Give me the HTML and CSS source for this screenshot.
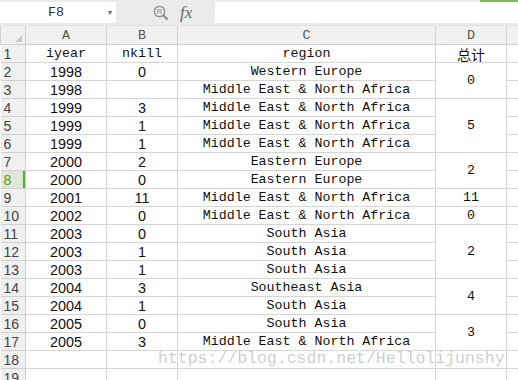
FILE: index.html
```html
<!DOCTYPE html>
<html lang="zh-CN">
<head>
  <meta charset="UTF-8">
  <title>Sheet</title>
  <link rel="stylesheet" href="styles.css">
</head>
<body>
  <div class="toolbar">
    <div class="name-box">
      <span class="cell-ref">F8</span>
      <span class="drop">&#9662;</span>
    </div>
    <div class="tools">
      <svg class="zoom-icon" width="16" height="16" viewBox="0 0 16 16">
        <circle cx="6.5" cy="6.5" r="5.2" fill="none" stroke="#8a8a8a" stroke-width="1.3"/>
        <line x1="10.3" y1="10.3" x2="14.5" y2="14.5" stroke="#8a8a8a" stroke-width="2"/>
        <text x="6.5" y="9.3" font-size="7.5" font-family="Liberation Sans, sans-serif" text-anchor="middle" fill="#8a8a8a">R</text>
      </svg>
      <span class="fx">fx</span>
    </div>
    <div class="formula"></div>
    <div class="accent"></div>
  </div>

  <table class="sheet">
    <colgroup>
      <col class="c-hdr">
      <col class="c-a">
      <col class="c-b">
      <col class="c-c">
      <col class="c-d">
      <col class="c-e">
    </colgroup>
    <thead>
      <tr>
        <th class="corner"><span class="tri"></span></th>
        <th>A</th><th>B</th><th>C</th><th>D</th><th></th>
      </tr>
    </thead>
    <tbody>
      <tr><td class="rn">1</td><td class="txt">iyear</td><td class="txt">nkill</td><td class="txt">region</td><td class="cjk">总计</td><td></td></tr>
      <tr><td class="rn">2</td><td class="num">1998</td><td class="num">0</td><td class="txt">Western Europe</td><td class="tot" rowspan="2">0</td><td></td></tr>
      <tr><td class="rn">3</td><td class="num">1998</td><td class="num"></td><td class="txt">Middle East &amp; North Africa</td><td></td></tr>
      <tr><td class="rn">4</td><td class="num">1999</td><td class="num">3</td><td class="txt">Middle East &amp; North Africa</td><td class="tot" rowspan="3">5</td><td></td></tr>
      <tr><td class="rn">5</td><td class="num">1999</td><td class="num">1</td><td class="txt">Middle East &amp; North Africa</td><td></td></tr>
      <tr><td class="rn">6</td><td class="num">1999</td><td class="num">1</td><td class="txt">Middle East &amp; North Africa</td><td></td></tr>
      <tr><td class="rn">7</td><td class="num">2000</td><td class="num">2</td><td class="txt">Eastern Europe</td><td class="tot" rowspan="2">2</td><td></td></tr>
      <tr><td class="rn active">8</td><td class="num">2000</td><td class="num">0</td><td class="txt">Eastern Europe</td><td></td></tr>
      <tr><td class="rn">9</td><td class="num">2001</td><td class="num">11</td><td class="txt">Middle East &amp; North Africa</td><td class="tot">11</td><td></td></tr>
      <tr><td class="rn">10</td><td class="num">2002</td><td class="num">0</td><td class="txt">Middle East &amp; North Africa</td><td class="tot">0</td><td></td></tr>
      <tr><td class="rn">11</td><td class="num">2003</td><td class="num">0</td><td class="txt">South Asia</td><td class="tot" rowspan="3">2</td><td></td></tr>
      <tr><td class="rn">12</td><td class="num">2003</td><td class="num">1</td><td class="txt">South Asia</td><td></td></tr>
      <tr><td class="rn">13</td><td class="num">2003</td><td class="num">1</td><td class="txt">South Asia</td><td></td></tr>
      <tr><td class="rn">14</td><td class="num">2004</td><td class="num">3</td><td class="txt">Southeast Asia</td><td class="tot" rowspan="2">4</td><td></td></tr>
      <tr><td class="rn">15</td><td class="num">2004</td><td class="num">1</td><td class="txt">South Asia</td><td></td></tr>
      <tr><td class="rn">16</td><td class="num">2005</td><td class="num">0</td><td class="txt">South Asia</td><td class="tot" rowspan="2">3</td><td></td></tr>
      <tr><td class="rn">17</td><td class="num">2005</td><td class="num">3</td><td class="txt">Middle East &amp; North Africa</td><td></td></tr>
      <tr><td class="rn">18</td><td></td><td></td><td></td><td></td><td></td></tr>
      <tr><td class="rn">19</td><td></td><td></td><td></td><td></td><td></td></tr>
    </tbody>
  </table>

  <div class="watermark">https://blog.csdn.net/Hellolijunshy</div>
</body>
</html>
```

FILE: styles.css
```css
html, body {
  margin: 0;
  padding: 0;
  width: 518px;
  height: 380px;
  overflow: hidden;
  background-color: #fff;
  font-family: "Liberation Mono", monospace;
  position: relative;
}
.toolbar {
  position: relative;
  display: flex;
  align-items: center;
  height: 26px;
  background-color: #ebebeb;
  border-bottom: 1px solid #e0e0e0;
  box-sizing: border-box;
}
.name-box {
  display: flex;
  align-items: center;
  width: 116px;
  height: 21px;
  background-color: #fff;
  box-sizing: border-box;
  padding: 0 4px 0 0;
}
.cell-ref {
  flex: 1;
  text-align: center;
  font-size: 13.3px;
  color: #333;
  padding-left: 4px;
}
.drop {
  font-family: "DejaVu Sans", sans-serif;
  font-size: 8px;
  color: #666;
}
.tools {
  display: flex;
  align-items: center;
  gap: 11px;
  width: 99px;
  padding-left: 37px;
  box-sizing: border-box;
}
.zoom-icon {
  display: block;
}
.fx {
  font-family: "Liberation Serif", serif;
  font-style: italic;
  font-size: 17px;
  color: #666;
  line-height: 1;
}
.formula {
  flex: 1;
  height: 21px;
  background-color: #fff;
}
.accent {
  position: absolute;
  top: 0;
  right: 0;
  width: 38px;
  height: 2px;
  background-color: #7dbb5c;
}
.sheet {
  border-collapse: collapse;
  table-layout: fixed;
  width: 530px;
}
.c-hdr { width: 25px; }
.c-a { width: 81px; }
.c-b { width: 71px; }
.c-c { width: 258px; }
.c-d { width: 71px; }
.c-e { width: 24px; }
.sheet th, .sheet td {
  height: 16px;
  padding: 1px 0 0;
  border: 1px solid #d6d6d6;
  text-align: center;
  white-space: nowrap;
  overflow: hidden;
  line-height: 16px;
}
.sheet th {
  background-color: #f0f0f0;
  border-color: #d0d0d0;
  font-weight: normal;
  font-size: 13.3px;
  color: #555;
  height: 15px;
  padding-top: 2px;
}
.sheet thead tr th {
  border-top: none;
}
.corner {
  position: relative;
}
.tri {
  position: absolute;
  right: 3px;
  bottom: 2px;
  width: 0;
  height: 0;
  border-left: 7px solid transparent;
  border-bottom: 7px solid #c8c8c8;
}
.rn {
  background-color: #f0f0f0;
  border-color: #d0d0d0 !important;
  text-align: left !important;
  padding-left: 3px !important;
  font-family: "Liberation Sans", sans-serif;
  font-size: 14px;
  color: #444;
  border-left: none !important;
}
.rn.active {
  background-color: #dfe8d8;
  color: #4f9a2e;
  box-shadow: inset -2px 0 0 #5aa83a;
}
.txt {
  font-size: 13.3px;
  color: #111;
}
.num {
  font-family: "Liberation Sans", sans-serif;
  font-size: 14.4px;
  color: #111;
}
.tot {
  font-size: 13.3px;
  color: #111;
}
.cjk {
  font-family: "Noto Sans CJK SC", sans-serif;
  font-size: 14px;
  color: #111;
}
.watermark {
  position: absolute;
  left: 158px;
  top: 349px;
  font-family: "Liberation Mono", monospace;
  font-size: 16.5px;
  color: rgba(190, 190, 190, 0.75);
  white-space: nowrap;
}
```
